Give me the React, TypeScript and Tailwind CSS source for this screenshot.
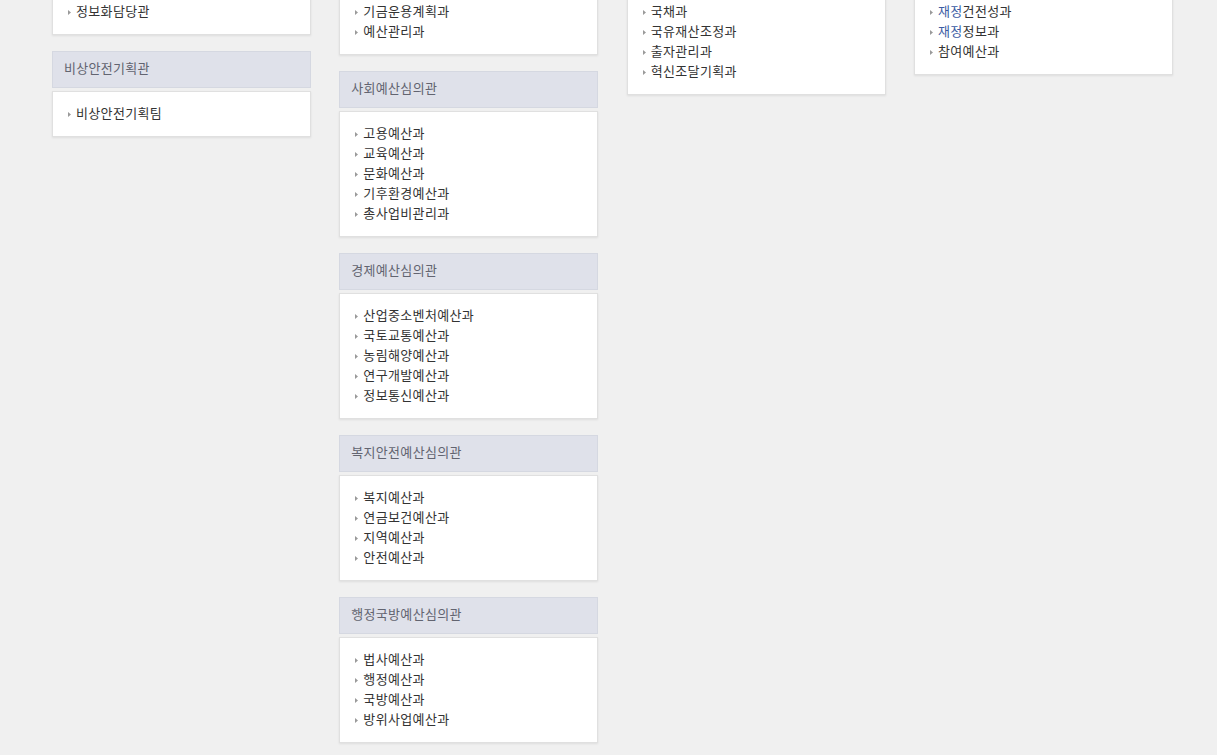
import React from "react";

type Item = string | React.ReactNode;
type Section = { title?: string; items: Item[] };

const Blue = ({ children }: { children: React.ReactNode }) => (
  <span className="text-[#3b5ba3]">{children}</span>
);

const columns: Section[][] = [
  [
    { items: ["정보화담당관"] },
    { title: "비상안전기획관", items: ["비상안전기획팀"] },
  ],
  [
    { items: ["기금운용계획과", "예산관리과"] },
    {
      title: "사회예산심의관",
      items: ["고용예산과", "교육예산과", "문화예산과", "기후환경예산과", "총사업비관리과"],
    },
    {
      title: "경제예산심의관",
      items: ["산업중소벤처예산과", "국토교통예산과", "농림해양예산과", "연구개발예산과", "정보통신예산과"],
    },
    {
      title: "복지안전예산심의관",
      items: ["복지예산과", "연금보건예산과", "지역예산과", "안전예산과"],
    },
    {
      title: "행정국방예산심의관",
      items: ["법사예산과", "행정예산과", "국방예산과", "방위사업예산과"],
    },
  ],
  [{ items: ["국채과", "국유재산조정과", "출자관리과", "혁신조달기획과"] }],
  [
    {
      items: [
        <>
          <Blue>재정</Blue>건전성과
        </>,
        <>
          <Blue>재정</Blue>정보과
        </>,
        "참여예산과",
      ],
    },
  ],
];

function Bullet() {
  return (
    <svg width="3" height="5" viewBox="0 0 3 5" className="mt-[2px] shrink-0">
      <path d="M0 0 L3 2.5 L0 5 Z" fill="#9a9a9a" />
    </svg>
  );
}

function SectionBlock({ s }: { s: Section }) {
  return (
    <div className="mb-[16px]">
      {s.title && (
        <div className="h-[37px] mb-[3px] bg-[#dfe1ea] border border-[#d5d8e1] flex items-center pl-[11px] pb-[3px] text-[13px] tracking-[0.3px] text-[#626470]">
          {s.title}
        </div>
      )}
      <div className="bg-white border border-[#e0e0e0] shadow-[0_1px_2px_rgba(0,0,0,0.08)] pt-[11px] pb-[13px] pl-[15px]">
        <ul>
          {s.items.map((it, i) => (
            <li key={i} className="flex items-center h-[20px] text-[13px] tracking-[0.35px] text-[#333333]">
              <Bullet />
              <span className="ml-[5px]">{it}</span>
            </li>
          ))}
        </ul>
      </div>
    </div>
  );
}

export default function App() {
  return (
    <div
      className="min-h-screen h-[755px] overflow-hidden bg-[#f0f0f0]"
      style={{ fontFamily: '"Noto Sans CJK KR", "Noto Sans", sans-serif' }}
    >
      <div className="ml-[52px] w-[1121px] -mt-[11px] grid grid-cols-4 gap-x-[28.333px] items-start">
        {columns.map((col, ci) => (
          <div key={ci} className="flex flex-col">
            {col.map((s, si) => (
              <SectionBlock key={si} s={s} />
            ))}
          </div>
        ))}
      </div>
    </div>
  );
}
